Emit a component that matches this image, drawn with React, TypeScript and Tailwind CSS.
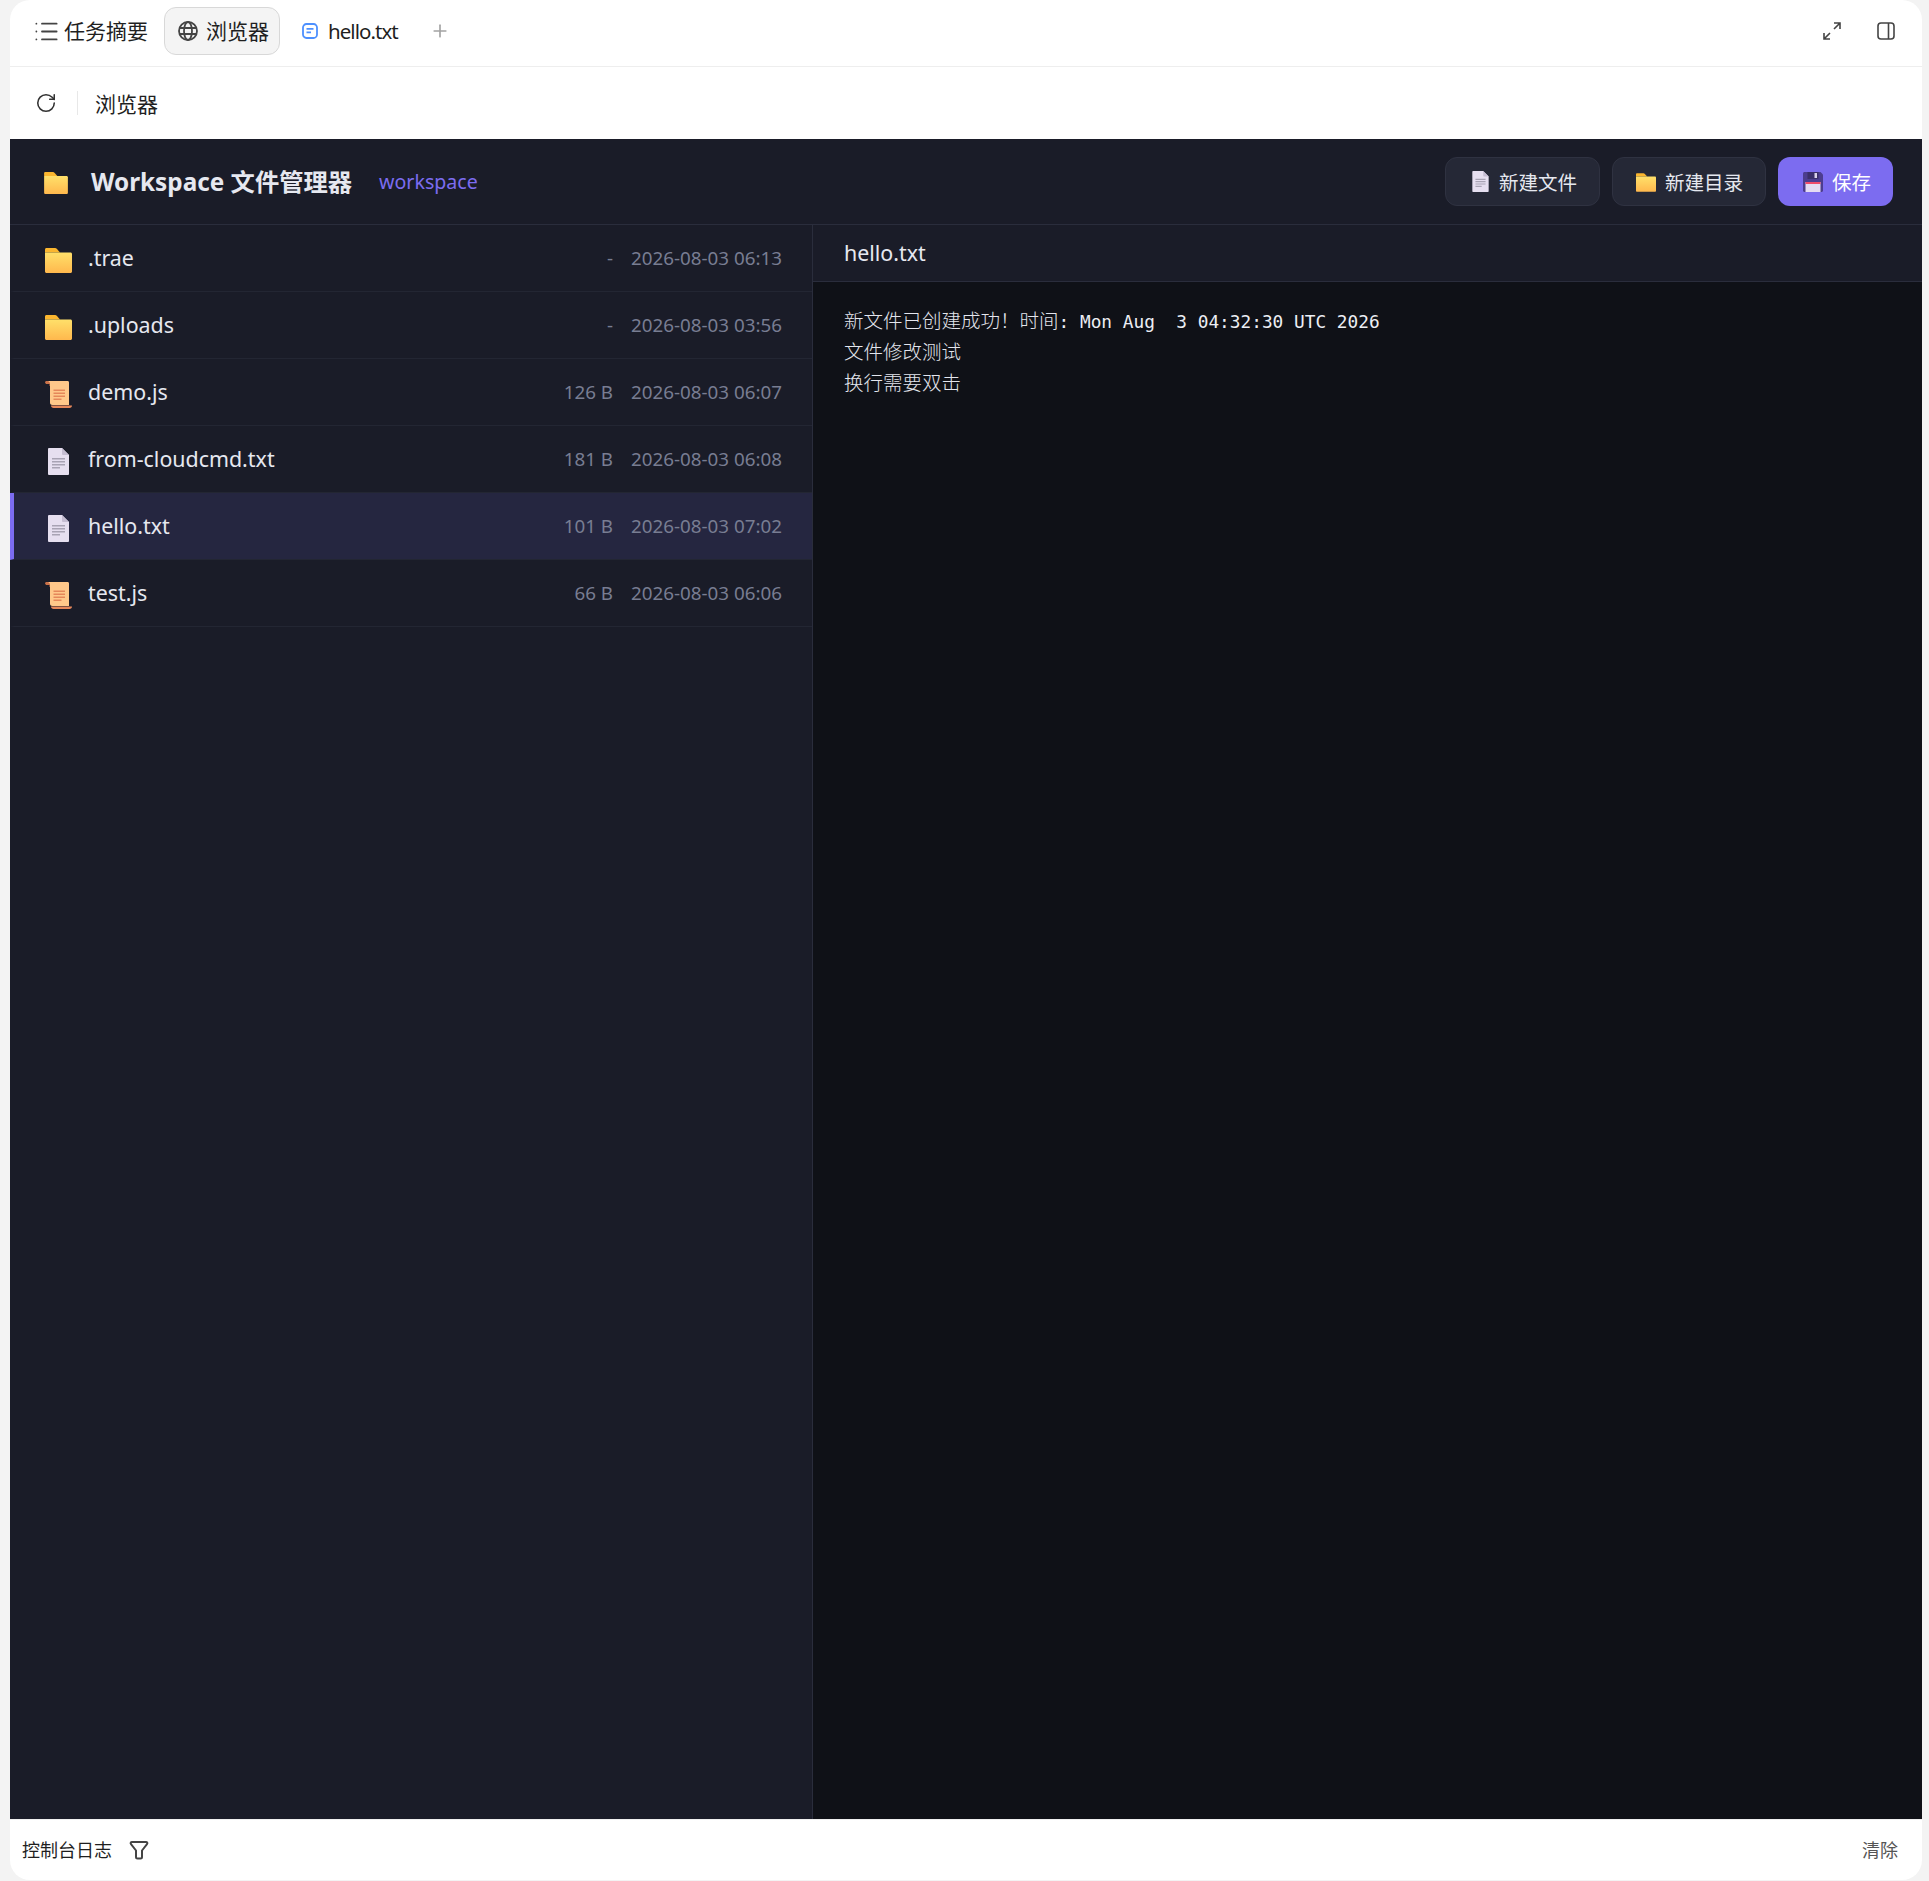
import { List, Plus, RotateCw } from "lucide-react";

const sans = "font-['Noto_Sans','Noto_Sans_CJK_SC',sans-serif]";

const FolderIcon = ({ className }: { className: string }) => (
  <svg viewBox="0 0 27 25" className={className}>
    <defs>
      <linearGradient id="folderFill" x1="0" y1="0" x2="0" y2="1">
        <stop offset="0" stopColor="#ffe06a" />
        <stop offset="1" stopColor="#ffb84d" />
      </linearGradient>
    </defs>
    <path d="M1.500 0H10c.8 0 1.400.3 2 1l3 3.500H0V1.500C0 .6.6 0 1.500 0z" fill="#fbb62f" />
    <path d="M0 4.500h25.500c.8 0 1.500.7 1.500 1.500v17.500c0 .8-.7 1.500-1.500 1.500H1.500C.7 25 0 24.300 0 23.500z" fill="url(#folderFill)" />
  </svg>
);

const PageIcon = ({ className }: { className: string }) => (
  <svg viewBox="0 0 21 27" className={className}>
    <path d="M1 0h13l7 7v19a1 1 0 0 1-1 1H1a1 1 0 0 1-1-1V1a1 1 0 0 1 1-1z" fill="#e6dff0" />
    <path d="M14 0l7 7h-6a1 1 0 0 1-1-1z" fill="#c5bdd2" />
    <path d="M4 10h13v1.500H4zM4 13h13v1.500H4zM4 16h13v1.500H4zM4 19h8v1.500H4z" fill="#a8a3b4" />
  </svg>
);

const ScrollIcon = ({ className }: { className: string }) => (
  <svg viewBox="0 0 27 27" className={className}>
    <path d="M0 1.500C0 .6.7 0 1.600 0H5c1.200 0 2 1 2 2.200V5H4.500V3H1z" fill="#c9714a" />
    <path d="M3 0h19.500c1 0 1.500.6 1.500 1.500V24H7.500C5.500 24 5 22.800 5 21.500V3C5 1.500 4.500.5 3 0z" fill="#ffc88a" />
    <path d="M8 24.500h19c0 1.500-1 2.500-2.500 2.500H8.500c-1.500 0-2.500-1-2.500-2.500z" fill="#e5875a" />
    <path d="M8.500 8.500H20V10H8.500zM8.500 11.500H20V13H8.500zM8.500 14.500H20V16H8.500zM8.500 17.500h8V19h-8z" fill="#e5875a" />
  </svg>
);

const SaveIcon = () => (
  <svg viewBox="0 0 20 20" className="w-[20px] h-[20px]">
    <path d="M1.500 0h16L20 2.500v16c0 .8-.7 1.500-1.500 1.500h-17C.7 20 0 19.300 0 18.500v-17C0 .7.7 0 1.500 0z" fill="#4c3d8f" />
    <path d="M4.500 0h11v7h-11z" fill="#3b2f6b" />
    <path d="M11.500 1H14v5h-2.500z" fill="#d9d2ea" />
    <path d="M2.500 10h15v10h-15z" fill="#e4dcf2" />
    <path d="M2.500 10h15v2h-15z" fill="#ef4c6a" />
  </svg>
);

const rows = [
  { name: ".trae", size: "-", date: "2026-08-03 06:13", kind: "folder" },
  { name: ".uploads", size: "-", date: "2026-08-03 03:56", kind: "folder" },
  { name: "demo.js", size: "126 B", date: "2026-08-03 06:07", kind: "script" },
  { name: "from-cloudcmd.txt", size: "181 B", date: "2026-08-03 06:08", kind: "text" },
  { name: "hello.txt", size: "101 B", date: "2026-08-03 07:02", kind: "text", selected: true },
  { name: "test.js", size: "66 B", date: "2026-08-03 06:06", kind: "script" },
];

const RowIcon = ({ kind }: { kind: string }) => {
  if (kind === "folder") return <FolderIcon className="w-[27px] h-[25px]" />;
  if (kind === "script") return <ScrollIcon className="w-[27px] h-[27px]" />;
  return <PageIcon className="w-[21px] h-[27px]" />;
};

const App = () => {
  return (
    <div className={`h-[1881px] bg-[#f3f3f3] pl-[10px] pr-[7px] pb-[1px] ${sans}`}>
      <div className="h-full flex flex-col bg-white rounded-[20px] overflow-hidden">
        {/* tabs */}
        <div className="h-[67px] shrink-0 flex items-center border-b border-[#eeeeee] pb-[4px] text-[#1f1f1f]">
          <div className="flex items-center pl-[23px]">
            <List className="w-[27px] h-[27px] text-[#444444] mr-[4px]" strokeWidth={1.6} />
            <span className="text-[21px] leading-none">任务摘要</span>
          </div>
          <div className="ml-[16px] h-[48px] flex items-center pl-[13px] pr-[10px] bg-[#f4f4f4] border border-[#d8d8d8] rounded-[12px]">
            <svg viewBox="0 0 20 20" fill="none" stroke="#444444" strokeWidth="1.800" className="w-[20px] h-[20px] mr-[8px]">
              <circle cx="10" cy="10" r="9" />
              <ellipse cx="10" cy="10" rx="4" ry="9" />
              <path d="M1.500 7h17M1.500 13h17" />
            </svg>
            <span className="text-[21px] leading-none">浏览器</span>
          </div>
          <div className="ml-[22px] flex items-center">
            <svg viewBox="0 0 16 16" fill="none" stroke="#4d90fe" strokeWidth="1.800" className="w-[16px] h-[16px] mr-[10px]">
              <rect x="1" y="1" width="14" height="14" rx="3.500" />
              <path d="M4.500 5.800h7M4.500 9.300h4.500" />
            </svg>
            <span className="text-[20.500px] leading-none tracking-[-0.95px]">hello.txt</span>
          </div>
          <Plus className="ml-[32px] w-[20px] h-[20px] text-[#a3a3a3]" strokeWidth={2} />
          <div className="ml-auto flex items-center pr-[27px] gap-[36px] text-[#444444]">
            <svg viewBox="0 0 18 18" fill="none" stroke="currentColor" strokeWidth="1.600" className="w-[18px] h-[18px]">
              <path d="M11 1h6v6M17 1l-6 6M1 11v6h6M1 17l6-6" />
            </svg>
            <svg viewBox="0 0 18 18" fill="none" stroke="currentColor" strokeWidth="1.600" className="w-[18px] h-[18px]">
              <rect x="1" y="1" width="16" height="16" rx="3" />
              <path d="M11.500 1v16" />
            </svg>
          </div>
        </div>

        {/* address bar */}
        <div className="h-[72px] shrink-0 flex items-center">
          <RotateCw className="ml-[25px] w-[22px] h-[22px] text-[#333333]" strokeWidth={1.7} />
          <div className="ml-[20px] w-px h-[24px] bg-[#e8e8e8]" />
          <span className="ml-[17px] pt-[3px] text-[21px] leading-none text-[#1f1f1f]">浏览器</span>
        </div>

        {/* file manager */}
        <div className="flex-1 min-h-0 flex flex-col bg-[#1a1c28]">
          <div className="h-[86px] shrink-0 flex items-center border-b border-[#2a2d3c] pl-[34px] pr-[29px]">
            <FolderIcon className="mt-[3px] w-[24px] h-[22px]" />
            <span className="ml-[23px] pt-[1px] text-[24.300px] font-bold text-[#e6e8f0]">Workspace 文件管理器</span>
            <span className="ml-[27px] text-[19.600px] text-[#7c6cf0]">workspace</span>
            <div className="ml-auto flex items-center gap-[12px] text-[19.500px] text-[#e6e8f0]">
              <button className="w-[155px] h-[49px] flex items-center pl-[26px] gap-[10px] rounded-[12px] bg-[#252836] border border-[#2f3241]">
                <PageIcon className="w-[17px] h-[21px]" />
                <span className="pt-[2px]">新建文件</span>
              </button>
              <button className="w-[154px] h-[49px] flex items-center pl-[23px] gap-[9px] rounded-[12px] bg-[#252836] border border-[#2f3241]">
                <FolderIcon className="mt-[2px] w-[20px] h-[19px]" />
                <span className="pt-[2px]">新建目录</span>
              </button>
              <button className="w-[115px] h-[49px] flex items-center pl-[25px] gap-[9px] rounded-[12px] bg-[#7c6cf0] text-white">
                <SaveIcon />
                <span className="pt-[2px]">保存</span>
              </button>
            </div>
          </div>

          <div className="flex-1 min-h-0 flex">
            <div className="w-[803px] shrink-0 border-r border-[#2a2d3c]">
              {rows.map((row) => (
                <div
                  key={row.name}
                  className={`h-[67px] flex items-center border-b border-[#232633] border-l-4 pl-[31px] pr-[30px] ${
                    row.selected ? "border-l-[#7c6cf0] bg-[#252640]" : "border-l-transparent"
                  }`}
                >
                  <div className="w-[27px] pt-[4px] flex justify-center shrink-0">
                    <RowIcon kind={row.kind} />
                  </div>
                  <span className="ml-[16px] pt-[1px] text-[21.400px] text-[#e6e8f0]">{row.name}</span>
                  <span className="ml-auto text-[18.800px] text-[#787d92]">{row.size}</span>
                  <span className="ml-[18px] text-[18.800px] text-[#787d92]">{row.date}</span>
                </div>
              ))}
            </div>

            <div className="flex-1 min-w-0 flex flex-col bg-[#0f1117]">
              <div className="h-[57px] shrink-0 flex items-center pl-[31px] pt-[1px] bg-[#1a1c28] border-b border-[#2a2d3c] text-[21.400px] text-[#e6e8f0]">
                hello.txt
              </div>
              <div className="pl-[31px] pt-[22px] text-[19.500px] leading-[31px] text-[#e4e6ee] font-['Noto_Sans_CJK_SC',sans-serif] font-light">
                <div className="h-[31px] whitespace-pre">
                  新文件已创建成功！时间
                  <span className="text-[17.800px] text-[#eceef4] font-['DejaVu_Sans_Mono',monospace] font-normal">: Mon Aug  3 04:32:30 UTC 2026</span>
                </div>
                <div className="h-[31px]">文件修改测试</div>
                <div className="h-[31px]">换行需要双击</div>
              </div>
            </div>
          </div>
        </div>

        {/* console footer */}
        <div className="h-[61px] shrink-0 flex items-center pl-[12px] pr-[24px] border-t border-[#f0f0f0]">
          <span className="text-[18px] text-[#1f1f1f]">控制台日志</span>
          <svg viewBox="0 0 20 20" fill="none" stroke="#444444" strokeWidth="2" strokeLinejoin="round" className="ml-[17px] w-[20px] h-[20px]">
            <path d="M3 2h14c1.200 0 1.800 1.300 1 2.200L13 10.500V17a1.500 1.500 0 0 1-1.500 1.500h-3A1.500 1.500 0 0 1 7 17v-6.500L2 4.200C1.200 3.300 1.800 2 3 2z" />
          </svg>
          <span className="ml-auto text-[18px] text-[#555555]">清除</span>
        </div>
      </div>
    </div>
  );
};

export default App;
